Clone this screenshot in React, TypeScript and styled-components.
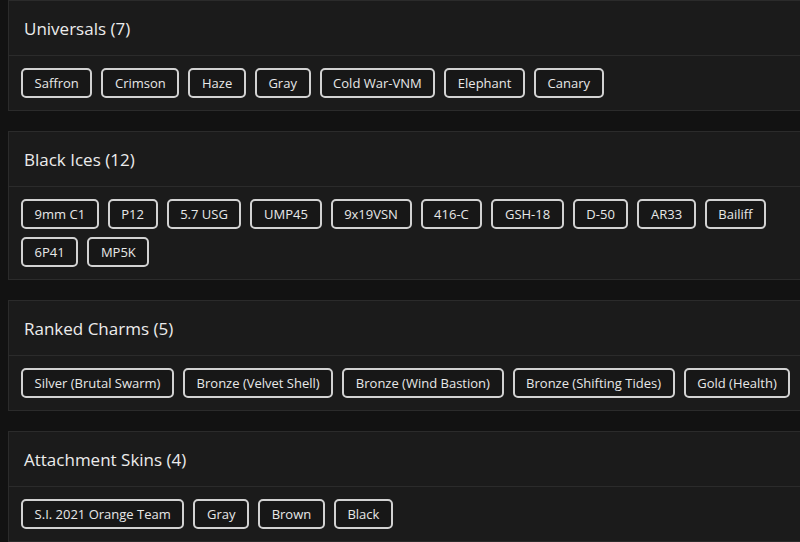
import React from "react";
import styled, { createGlobalStyle } from "styled-components";

const Global = createGlobalStyle`
  html, body { margin: 0; padding: 0; background: #121212; overflow: hidden; }
  body { font-family: "Open Sans", "Liberation Sans", sans-serif; color: #e8e8e8; }
`;

const Page = styled.div`
  padding: 0 0 0 8px;
  width: 820px;
  display: flex;
  flex-direction: column;
  gap: 20px;
`;

const Card = styled.section`
  background: #1b1b1b;
  border: 1px solid #2b2b2b;
`;

const Header = styled.h2`
  margin: 0;
  height: 54px;
  display: flex;
  align-items: center;
  padding: 0 15px;
  border-bottom: 1px solid #2b2b2b;
  font-size: 17px;
  font-weight: 500;
  color: #ececec;
`;

const Body = styled.div`
  padding: 12px;
  display: flex;
  flex-wrap: wrap;
  gap: 8px 9px;
`;

const Tag = styled.span`
  box-sizing: border-box;
  height: 30px;
  display: inline-flex;
  align-items: center;
  padding: 0 11.6px;
  border: 2px solid #d2d2d2;
  border-radius: 5px;
  background: #171717;
  font-size: 13px;
  font-weight: 500;
  color: #e8e8e8;
  white-space: nowrap;
`;

const sections: { title: string; items: string[] }[] = [
  { title: "Universals", items: ["Saffron", "Crimson", "Haze", "Gray", "Cold War-VNM", "Elephant", "Canary"] },
  {
    title: "Black Ices",
    items: ["9mm C1", "P12", "5.7 USG", "UMP45", "9x19VSN", "416-C", "GSH-18", "D-50", "AR33", "Bailiff", "6P41", "MP5K"],
  },
  {
    title: "Ranked Charms",
    items: ["Silver (Brutal Swarm)", "Bronze (Velvet Shell)", "Bronze (Wind Bastion)", "Bronze (Shifting Tides)", "Gold (Health)"],
  },
  { title: "Attachment Skins", items: ["S.I. 2021 Orange Team", "Gray", "Brown", "Black"] },
];

export default function App() {
  return (
    <>
      <Global />
      <Page>
        {sections.map((s) => (
          <Card key={s.title}>
            <Header>
              {s.title} ({s.items.length})
            </Header>
            <Body>
              {s.items.map((it, i) => (
                <Tag key={i}>{it}</Tag>
              ))}
            </Body>
          </Card>
        ))}
      </Page>
    </>
  );
}
